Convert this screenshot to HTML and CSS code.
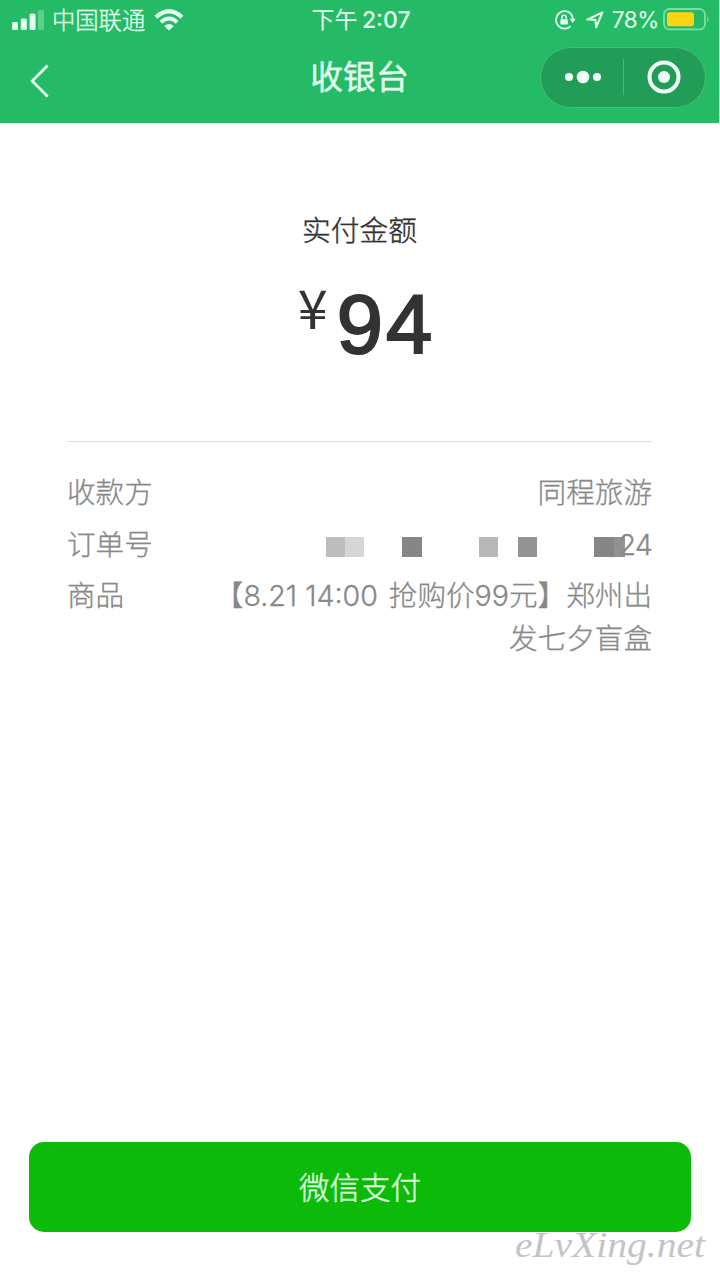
FILE: index.html
```html
<!DOCTYPE html>
<html lang="zh-CN">
<head>
    <meta charset="UTF-8">
    <title>收银台</title>
    <link rel="stylesheet" href="styles.css">
</head>
<body>

    <div class="page">
        <header class="header">
            <!-- 状态栏 -->
            <div class="status-bar">
                <div class="status-left">
                    <svg class="signal" width="32" height="20" viewBox="0 0 32 20">
                        <rect x="0" y="12" width="6" height="8" rx="1.5"/>
                        <rect x="8.8" y="8.5" width="6" height="11.5" rx="1.5"/>
                        <rect x="17.6" y="3.5" width="6" height="16.5" rx="1.5"/>
                        <rect x="26" y="0" width="6" height="20" rx="1.5" opacity="0.3"/>
                    </svg>
                    <span class="carrier">中国联通</span>
                    <svg class="wifi" width="30" height="22" viewBox="0 0 30 22">
                        <path d="M2 8.2Q15 -3.8 28 8.2" stroke-width="4.2"/>
                        <path d="M6.8 13.2Q15 5.8 23.2 13.2" stroke-width="4"/>
                        <path class="wifi-dot" d="M10.2 17Q15 12.8 19.8 17L15 21.6Z"/>
                    </svg>
                </div>
                <span class="clock">下午 <b>2:07</b></span>
                <div class="status-right">
                    <svg class="lock" width="22" height="20" viewBox="0 0 22 20">
                        <path d="M17.4 4.4A8.7 8.7 0 1 0 16.5 16.3M17.4 4.4A8.7 8.7 0 0 1 18.7 10"/>
                        <path class="fill" d="M15.6 8.8H21.6L18.6 13Z"/>
                        <rect class="fill" x="6.4" y="9" width="7.4" height="5.6" rx="0.8"/>
                        <path d="M8 9.5V7.4A2.1 2.1 0 0 1 12.2 7.4V9.5" stroke-width="1.4"/>
                    </svg>
                    <svg class="location" width="18" height="18" viewBox="0 0 18 18">
                        <path d="M1.2 8.6L16.4 1.4L10.2 16.4L9.4 8.8Z"/>
                    </svg>
                    <span class="percent">78%</span>
                    <svg class="battery" width="47" height="24" viewBox="0 0 47 24">
                        <rect x="1" y="1" width="41" height="20.4" rx="5.5"/>
                        <rect class="battery-level" x="4" y="4.2" width="27" height="14" rx="2.5"/>
                        <path class="battery-tip" d="M44.4 8Q47 11.2 44.4 14.4Z"/>
                    </svg>
                </div>
            </div>

            <!-- 导航栏 -->
            <div class="nav">
                <svg class="back" width="20" height="34" viewBox="0 0 20 34">
                    <path d="M17.6 1.6L2.2 17L17.6 32.4"/>
                </svg>
                <h1 class="title">收银台</h1>
                <div class="capsule">
                    <svg class="more" width="36" height="14" viewBox="0 0 36 14">
                        <circle cx="4" cy="7" r="4"/>
                        <circle cx="18" cy="7" r="6.3"/>
                        <circle cx="32" cy="7" r="4"/>
                    </svg>
                    <span class="capsule-line"></span>
                    <svg class="close" width="34" height="34" viewBox="0 0 34 34">
                        <circle class="ring" cx="17" cy="17" r="14.5"/>
                        <circle cx="17" cy="17" r="6"/>
                    </svg>
                </div>
            </div>
        </header>

        <main class="content">
            <!-- 金额 -->
            <section class="amount">
                <p class="amount-label">实付金额</p>
                <p class="amount-value"><span class="currency">¥</span><span class="number">94</span></p>
            </section>

            <!-- 订单信息 -->
            <dl class="details">
                <div class="row">
                    <dt>收款方</dt>
                    <dd>同程旅游</dd>
                </div>
                <div class="row">
                    <dt>订单号</dt>
                    <dd class="order">
                        <span class="mosaic">
                            <i class="c1"></i><i class="c2"></i><i class="c3"></i><i class="c4"></i><i class="c5"></i><i class="c6"></i><i class="c7"></i>
                        </span>
                        <span class="order-tail">24</span>
                    </dd>
                </div>
                <div class="row">
                    <dt>商品</dt>
                    <dd><span class="date">【8.21 14:00</span> 抢购价99元】郑州出<br>发七夕盲盒</dd>
                </div>
            </dl>
        </main>

        <footer class="footer">
            <button class="pay-button">微信支付</button>
            <svg class="watermark" width="206" height="50" viewBox="0 0 206 50">
                <text x="6" y="35" textLength="190" lengthAdjust="spacingAndGlyphs">eLvXing.net</text>
            </svg>
        </footer>
    </div>

</body>
</html>
```
FILE: styles.css
```css
* {
    box-sizing: border-box;
}
body {
    margin: 0;
    background-color: #fff;
    font-family: Inter, "Noto Sans CJK SC", sans-serif;
}
.page {
    display: flex;
    flex-direction: column;
    height: 1280px;
    overflow: hidden;
}
/* 顶部 */
.header {
    height: 123px;
    margin-right: 1px;
    background-color: #24ba66;
    color: #e4fff0;
    fill: #e4fff0;
}
.status-bar {
    display: grid;
    grid-template-columns: 1fr auto 1fr;
    align-items: center;
    height: 40px;
    padding: 0 9px 0 12px;
}
.status-left,
.status-right {
    display: flex;
    align-items: center;
    height: 39px;
}
.status-right {
    justify-content: flex-end;
    height: 38px;
}
.carrier {
    margin: 1px 9px 0 8px;
    font-size: 23.3px;
    line-height: 38px;
    font-weight: 300;
    -webkit-text-stroke: 0.3px #e4fff0;
}
.wifi {
    fill: none;
    stroke: #e4fff0;
}
.wifi-dot {
    fill: #e4fff0;
    stroke: none;
}
.clock {
    font-size: 23px;
    line-height: 39px;
    white-space: nowrap;
}
.clock b {
    font-weight: 500;
    margin-left: -2px;
}
.lock {
    margin-right: 10px;
    fill: none;
    stroke: #e4fff0;
    stroke-width: 1.8;
}
.lock .fill {
    fill: #e4fff0;
    stroke: none;
}
.location {
    margin-right: 8px;
    fill: none;
    stroke: #e4fff0;
    stroke-width: 2;
    stroke-linejoin: round;
}
.percent {
    margin-right: 4px;
    font-size: 22.5px;
    line-height: 38px;
    letter-spacing: -0.4px;
}
.battery {
    fill: none;
    stroke: #7ddda5;
    stroke-width: 1.8;
}
.battery-level {
    fill: #fdd314;
    stroke: none;
}
.battery-tip {
    fill: #7ddda5;
    stroke: none;
}
.nav {
    display: grid;
    grid-template-columns: 1fr auto 1fr;
    align-items: center;
    height: 74px;
    padding: 0 13px;
}
.back {
    margin: 7px 0 0 17px;
    fill: none;
    stroke: #e4fff0;
    stroke-width: 2.8;
}
.title {
    margin: 0;
    font-size: 32.8px;
    line-height: 74px;
    font-weight: 400;
    -webkit-text-stroke: 0.4px #e4fff0;
}
.capsule {
    display: flex;
    align-items: center;
    justify-self: end;
    width: 166px;
    height: 61px;
    padding-left: 24px;
    border: 1px solid #49bd7b;
    border-radius: 31px;
    background-color: #219d57;
    fill: #f0fff7;
}
.capsule-line {
    width: 1px;
    height: 36px;
    margin: 0 23px 0 22px;
    background-color: #4fb47b;
}
.ring {
    fill: none;
    stroke: #f0fff7;
    stroke-width: 4;
}
/* 金额 */
.content {
    flex: 1;
    padding: 86px 68px 0 67px;
}
.amount {
    height: 233px;
    border-bottom: 1px solid #dedede;
    color: #333;
    text-align: center;
}
.amount-label {
    margin: 0;
    padding-top: 1px;
    font-size: 28.8px;
    line-height: 42px;
    font-weight: 300;
    -webkit-text-stroke: 0.4px #333;
}
.amount-value {
    display: flex;
    justify-content: center;
    margin: 21px 0 0;
    padding-left: 14px;
}
.currency {
    margin-right: 9px;
    font-family: "Noto Sans CJK SC", sans-serif;
    font-size: 54px;
    line-height: 66px;
}
.number {
    font-family: "Liberation Sans", Arial, sans-serif;
    font-size: 83px;
    line-height: 103px;
    letter-spacing: 3px;
    -webkit-text-stroke: 2.2px #333;
}
/* 订单信息 */
.details {
    margin: 29px 0 0;
    color: #888;
    font-size: 28.6px;
    line-height: 43px;
    font-weight: 300;
    -webkit-text-stroke: 0.3px #888;
}
.row {
    display: flex;
    justify-content: space-between;
    margin-bottom: 8.5px;
}
.row dd {
    margin: 0;
    text-align: right;
    white-space: nowrap;
}
.date {
    margin-right: 3px;
}
.order {
    display: flex;
}
.order-tail {
    letter-spacing: -0.8px;
}
/* 订单号马赛克 */
.mosaic {
    display: grid;
    grid-template-columns: repeat(15, 19.2px) 11px;
    grid-template-rows: 20px;
    margin: 14.5px -6px 0 0;
}
.c1 { grid-column: 1; background-color: #bdbdbd; }
.c2 { grid-column: 2; background-color: #d6d6d6; }
.c3 { grid-column: 5; background-color: #868686; }
.c4 { grid-column: 9; background-color: #b8b8b8; }
.c5 { grid-column: 11; background-color: #939393; }
.c6 { grid-column: 15; background-color: #868686; }
.c7 { grid-column: 16; background-color: #929292; }
/* 底部 */
.footer {
    position: relative;
    height: 138px;
    padding: 0 29px;
}
.pay-button {
    display: block;
    width: 100%;
    height: 90px;
    padding: 0 0 2px;
    border: none;
    border-radius: 15px;
    background-color: #0cbb0a;
    color: #e2ffe0;
    font-family: inherit;
    font-size: 30.5px;
    font-weight: 300;
    -webkit-text-stroke: 0.4px #e2ffe0;
}
.watermark {
    position: absolute;
    right: 5px;
    bottom: 8px;
    fill: #c4c4c4;
    font-family: "Liberation Serif", "Times New Roman", serif;
    font-size: 36px;
    font-style: italic;
}
```
